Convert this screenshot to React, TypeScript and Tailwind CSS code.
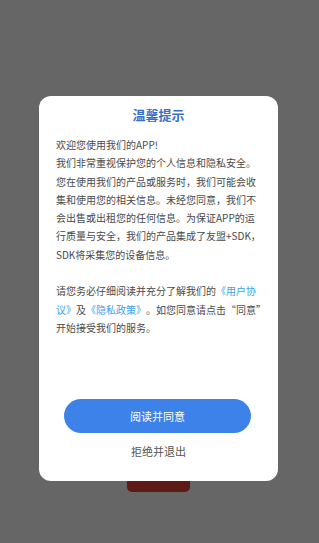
const FONT = { fontFamily: '"Noto Sans CJK SC", "Noto Sans", sans-serif' };

const INTRO = [
  "欢迎您使用我们的APP!",
  "我们非常重视保护您的个人信息和隐私安全。",
  "您在使用我们的产品或服务时，我们可能会收",
  "集和使用您的相关信息。未经您同意，我们不",
  "会出售或出租您的任何信息。为保证APP的运",
  "行质量与安全，我们的产品集成了友盟+SDK，",
  "SDK将采集您的设备信息。",
];

function Link({ children }: { children: React.ReactNode }) {
  return <span className="text-[#3ea2ea]">{children}</span>;
}

export default function App() {
  return (
    <div className="relative h-[543px] w-[319px] overflow-hidden bg-[#666666]" style={FONT}>
      {/* dimmed button on the page underneath */}
      <div className="absolute left-[127px] top-[440px] h-[52px] w-[63px] rounded-[5px] bg-[#5e1a14]" />

      {/* dialog */}
      <div className="absolute left-[39px] top-[96px] flex h-[385px] w-[239px] flex-col rounded-[12px] bg-white">
        <h2 className="pt-[9px] text-center text-[13px] font-bold leading-[20px] text-[#3b6fc6]">
          温馨提示
        </h2>

        <div className="mt-[11px] px-[17px] text-[10px] leading-[18.3px] text-[#4a4a4a] whitespace-nowrap [text-spacing-trim:space-all]">
          {INTRO.map((l) => (
            <div key={l}>{l}</div>
          ))}
          <div className="h-[18.3px]" />
          <div>
            请您务必仔细阅读并充分了解我们的<Link>《用户协</Link>
          </div>
          <div>
            <Link>议》</Link>及<Link>《隐私政策》</Link>。如您同意请点击“同意”
          </div>
          <div>开始接受我们的服务。</div>
        </div>

        <div className="mt-auto flex flex-col items-center pb-[21px]">
          <button className="ml-[-2px] flex h-[34px] w-[187px] items-center justify-center rounded-full bg-[#3d82e8] text-[11px] text-white">
            阅读并同意
          </button>
          <button className="mt-[9px] text-[11px] leading-[18px] text-[#555555]">拒绝并退出</button>
        </div>
      </div>
    </div>
  );
}
